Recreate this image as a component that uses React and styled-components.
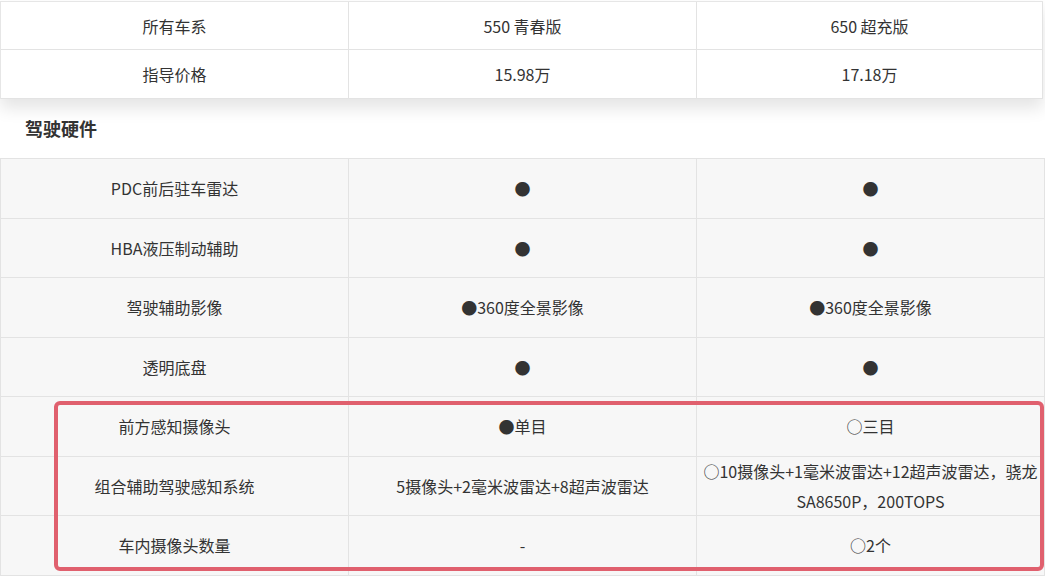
import React from 'react';
import styled, { createGlobalStyle } from 'styled-components';

const GlobalStyle = createGlobalStyle`
  html, body {
    margin: 0;
    padding: 0;
    background: #ffffff;
  }
  body {
    font-family: "Noto Sans CJK SC", "Noto Sans", sans-serif;
    color: #333333;
  }
`;

const Page = styled.div`
  width: 1045px;
  padding-top: 1px;
  overflow: hidden;
`;

const HeadTable = styled.div`
  width: 1043px;
  display: grid;
  grid-template-columns: 348px 348px 1fr;
  background: #ffffff;
  border-top: 1px solid #e6e6e6;
  border-left: 1px solid #e6e6e6;
  box-sizing: border-box;
  box-shadow: 0 9px 16px rgba(0, 0, 0, 0.11);
  position: relative;
  z-index: 1;
`;

const Cell = styled.div`
  display: flex;
  align-items: center;
  justify-content: center;
  text-align: center;
  box-sizing: border-box;
  height: ${({ $h }) => $h}px;
  padding: 0 4px;
  font-size: 16px;
  line-height: 30px;
  color: #333333;
  border-right: 1px solid #e3e3e3;
  border-bottom: 1px solid #e3e3e3;
  background: ${({ $grey }) => ($grey ? '#f7f7f7' : '#ffffff')};
  white-space: nowrap;
`;

const SectionTitle = styled.div`
  height: 59px;
  display: flex;
  align-items: center;
  padding-left: 25px;
  padding-bottom: 2px;
  box-sizing: border-box;
  font-size: 18px;
  font-weight: 700;
  color: #333333;
`;

const BodyWrap = styled.div`
  position: relative;
`;

const BodyTable = styled.div`
  display: grid;
  grid-template-columns: 348px 348px 1fr;
  border-top: 1px solid #e3e3e3;
  border-left: 1px solid #e3e3e3;
`;

const Highlight = styled.div`
  position: absolute;
  left: 54px;
  top: 243px;
  width: 990px;
  height: 170px;
  border: 4px solid #e0606e;
  border-radius: 6px;
  box-sizing: border-box;
  pointer-events: none;
`;

const head = [
  ['所有车系', '550 青春版', '650 超充版'],
  ['指导价格', '15.98万', '17.18万'],
];

const rows = [
  ['PDC前后驻车雷达', '●', '●'],
  ['HBA液压制动辅助', '●', '●'],
  ['驾驶辅助影像', '●360度全景影像', '●360度全景影像'],
  ['透明底盘', '●', '●'],
  ['前方感知摄像头', '●单目', '○三目'],
  [
    '组合辅助驾驶感知系统',
    '5摄像头+2毫米波雷达+8超声波雷达',
    <>
      ○10摄像头+1毫米波雷达+12超声波雷达，骁龙
      <br />
      SA8650P，200TOPS
    </>,
  ],
  ['车内摄像头数量', '-', '○2个'],
];

const App = () => {
  return (
    <Page>
      <GlobalStyle />
      <HeadTable>
        {head.map((r, i) =>
          r.map((c, j) => (
            <Cell key={`h${i}${j}`} $h={i === 0 ? 48 : 49}>
              {c}
            </Cell>
          ))
        )}
      </HeadTable>
      <SectionTitle>驾驶硬件</SectionTitle>
      <BodyWrap>
        <BodyTable>
          {rows.map((r, i) =>
            r.map((c, j) => (
              <Cell key={`b${i}${j}`} $h={59.5} $grey>
                <span>{c}</span>
              </Cell>
            ))
          )}
        </BodyTable>
        <Highlight />
      </BodyWrap>
    </Page>
  );
};

export default App;
